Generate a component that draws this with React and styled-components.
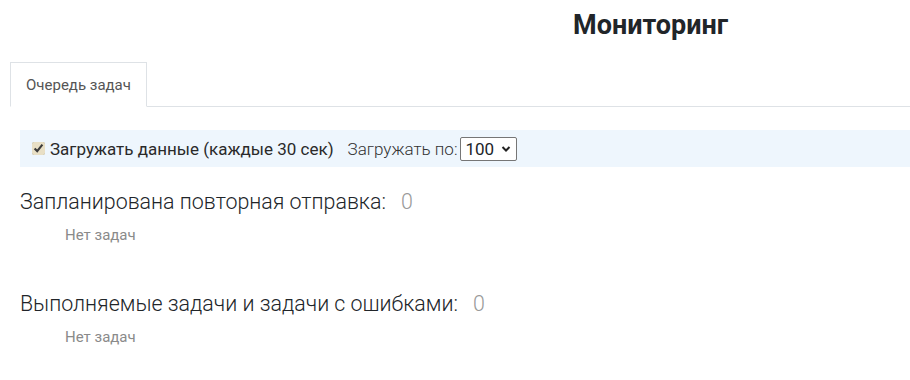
import React from 'react';
import styled, { createGlobalStyle } from 'styled-components';

const GlobalStyle = createGlobalStyle`
   body {
      margin: 0;
      background: #fff;
      font-family: Roboto, "Liberation Sans", sans-serif;
      color: #212529;
      overflow: hidden;
   }
`;

const Page = styled.div`
   width: 910px;
   padding: 0 0 0 10px;
   box-sizing: border-box;
`;

const Title = styled.h1`
   margin: 0;
   padding: 7px 0 0 563px;
   height: 62px;
   box-sizing: border-box;
   font-size: 27px;
   font-weight: 700;
   line-height: 36px;
   color: #212529;
`;

const Tabs = styled.div`
   display: flex;
   border-bottom: 1px solid #dee2e6;
   height: 45px;
   box-sizing: border-box;
`;

const Tab = styled.div`
   border: 1px solid #dee2e6;
   border-bottom-color: #fff;
   margin-bottom: -1px;
   width: 137px;
   box-sizing: border-box;
   display: flex;
   align-items: center;
   justify-content: center;
   font-size: 15px;
   color: #555;
   background: #fff;
`;

const Content = styled.div`
   padding: 23px 0 0 10px;
`;

const Toolbar = styled.div`
   display: flex;
   align-items: center;
   height: 37px;
   background: #eef6fd;
   padding-left: 12px;
   font-size: 17px;
`;

const CheckLabel = styled.label`
   display: flex;
   align-items: center;
   gap: 5px;
   color: #2a2a2a;

   input {
      margin: 0;
      width: 13px;
      height: 13px;
      accent-color: #e8dfc5;
   }
`;

const PageSize = styled.label`
   display: flex;
   align-items: center;
   gap: 3px;
   margin-left: 14px;
   font-weight: 300;
   color: #333;
`;

const Select = styled.div`
   display: flex;
   align-items: center;
   gap: 7px;
   height: 24px;
   width: 57px;
   box-sizing: border-box;
   border: 1px solid #767676;
   border-radius: 2px;
   background: #fff;
   padding: 0 5px 0 4px;
   font-weight: 400;
   color: #212529;
`;

const Section = styled.div`
   padding-top: ${p => p.$top}px;
`;

const SectionTitle = styled.div`
   font-size: 21.4px;
   font-weight: 300;
   line-height: 28px;
   color: #212529;

   span {
      color: #999;
      margin-left: 15px;
   }
`;

const Empty = styled.div`
   padding: 9px 0 0 45px;
   font-size: 15px;
   line-height: 20px;
   color: #8a8a8a;
`;

const Chevron = () => (
   <svg width="10" height="8" viewBox="0 0 10 8">
      <path d="M1.5 2 L5 5.5 L8.5 2" fill="none" stroke="#222" strokeWidth="2" />
   </svg>
);

const App = () => (
   <Page>
      <GlobalStyle />
      <Title>Мониторинг</Title>
      <Tabs>
         <Tab>Очередь задач</Tab>
      </Tabs>
      <Content>
         <Toolbar>
            <CheckLabel>
               <input type="checkbox" defaultChecked />
               Загружать данные (каждые 30 сек)
            </CheckLabel>
            <PageSize>
               Загружать по:
               <Select>
                  100
                  <Chevron />
               </Select>
            </PageSize>
         </Toolbar>
         <Section $top={21}>
            <SectionTitle>
               Запланирована повторная отправка:<span>0</span>
            </SectionTitle>
            <Empty>Нет задач</Empty>
         </Section>
         <Section $top={45}>
            <SectionTitle>
               Выполняемые задачи и задачи с ошибками:<span>0</span>
            </SectionTitle>
            <Empty>Нет задач</Empty>
         </Section>
      </Content>
   </Page>
);

export default App;
